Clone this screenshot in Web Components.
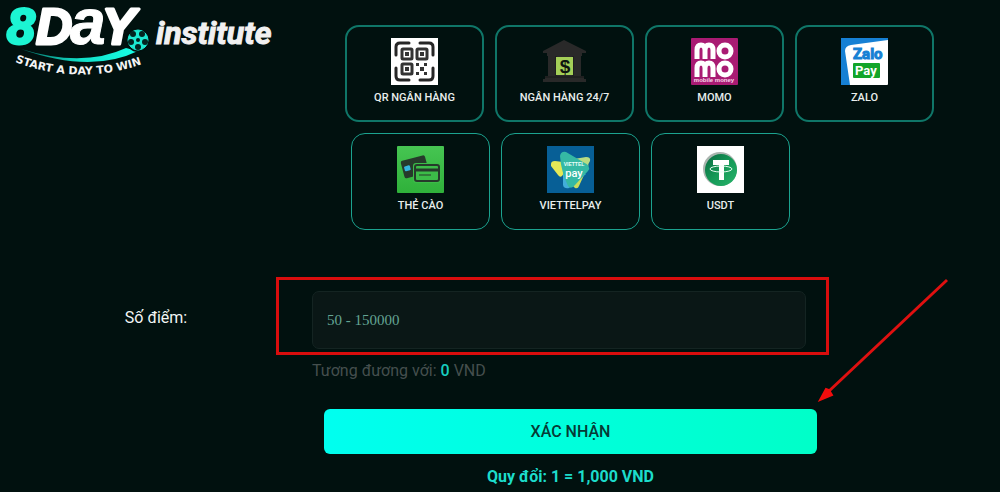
<!DOCTYPE html>
<html lang="vi">
<head>
<meta charset="utf-8">
<title>8DAY institute</title>
<style>
  body { margin: 0; background: #01110f; color: #fff; font-family: Roboto, "Liberation Sans", sans-serif; }
</style>
</head>
<body>
<deposit-page></deposit-page>

<script>
const define = (name, html, setup) => {
  const template = document.createElement("template");
  template.innerHTML = html;
  customElements.define(name, class extends HTMLElement {
    constructor() {
      super();
      this.attachShadow({ mode: "open" }).append(template.content.cloneNode(true));
    }
    connectedCallback() { if (setup) setup(this, this.shadowRoot); }
  });
};

define("brand-logo", `
<style>
  :host { display: block; }
  a { display: block; }
  svg { display: block; overflow: visible; }
</style>
<a href="#" aria-label="8DAY institute">
<svg width="280" height="84" viewBox="0 0 280 84">
  <defs>
    <linearGradient id="swoosh" x1="0" x2="1"><stop offset="0" stop-color="#046b62"/><stop offset=".5" stop-color="#12dfc8"/><stop offset="1" stop-color="#17ffe6"/></linearGradient>
    <path id="arc" d="M15 62 Q85 88 153 60"/>
  </defs>
  <g font-family="Liberation Sans, sans-serif" font-weight="700" font-style="italic" font-size="50" fill="#fff" stroke="#fff" stroke-width="3" stroke-linejoin="round">
    <text x="7" y="44" fill="#1cf5d3" stroke="#1cf5d3">8</text>
    <text x="36" y="44">D</text>
    <text x="70" y="44" font-size="64" stroke-width="1">a</text>
    <text x="102" y="44">Y</text>
  </g>
  <path d="M21 49 Q83 68 126 48 L138 51 Q91 74 21 49Z" fill="url(#swoosh)"/>
  <circle cx="138" cy="40" r="12" fill="#01110f"/>
  <circle cx="138" cy="40" r="10" fill="#1ce9d0" stroke="#1ce9d0" stroke-width="1"/>
  <g fill="#032520"><circle cx="133" cy="34" r="3"/><circle cx="142" cy="34" r="3"/><circle cx="145" cy="42" r="3"/><circle cx="138" cy="47" r="3"/><circle cx="131" cy="42" r="3"/><circle cx="138" cy="40" r="2"/></g>
  <text font-family="DejaVu Sans, sans-serif" font-weight="700" font-size="11" fill="#f4f4f4"><textPath href="#arc">START A DAY TO WIN</textPath></text>
  <text x="156" y="44" font-family="Liberation Sans Narrow, Roboto, sans-serif" font-weight="700" font-style="italic" font-size="32" fill="#f1f1f1" stroke="#f1f1f1">institute</text>
</svg>
</a>`);

const icons = {
  qr: `<rect width="47" height="47" fill="#fff"/>
    <g fill="none" stroke="#262626" stroke-width="3" stroke-linecap="round">
      <path d="M5 17V9q0-4 4-4h9M29 5h9q4 0 4 4v8M42 30v8q0 4-4 4h-9M18 42H9q-4 0-4-4v-8"/></g>
    <g fill="none" stroke="#333" stroke-width="3"><rect x="11" y="11" width="10" height="10" rx="1"/><rect x="26" y="11" width="10" height="10" rx="1"/><rect x="11" y="26" width="10" height="10" rx="1"/></g>
    <g fill="#333"><path d="M14 14h4v4h-4zM29 14h4v4h-4zM14 29h4v4h-4zM25 25h3v3h-3zM33 25h3v3h-3zM29 29h4v4h-4zM25 34h3v3h-3zM33 34h3v3h-3z"/></g>`,
  bank: `<g fill="#292929"><path d="M23 2L45 13v2H2v-2zM6 15h35v3H6zM7 18h8v20H7zM32 18h8v20h-8zM15 18h17v20H15zM4 38h39v3H4zM2 41h43v3H2z"/></g>
    <path d="M15 18v20M32 18v20M4 39h39" stroke="#171918"/>
    <rect x="15" y="19" width="17" height="18" fill="#a4cf58"/>
    <text x="24" y="35" text-anchor="middle" font-family="Liberation Sans, sans-serif" font-weight="700" font-size="19" fill="#101510">$</text>`,
  momo: `<rect width="47" height="47" rx="1" fill="#a91b73"/>
    <g fill="none" stroke="#fff" stroke-width="5">
      <path d="M6 21v-9q0-5 4-5t4 5v9M14 12q0-5 4-5t4 5v9M6 39v-9q0-5 4-5t4 5v9M14 30q0-5 4-5t4 5v9"/>
      <circle cx="34" cy="13" r="6"/><circle cx="34" cy="31" r="6"/></g>
    <text x="23" y="44" text-anchor="middle" font-family="Liberation Sans, sans-serif" font-weight="700" font-size="6" fill="#f7d7e9">mobile money</text>`,
  zalo: `<rect width="47" height="47" rx="1" fill="#fff"/><path d="M0 0h47v2L10 7Q4 8 4 13l5 34H0z" fill="#1680d4"/>
    <text x="12" y="21" font-family="Roboto, sans-serif" font-weight="700" font-size="15" fill="#1680d4" stroke="#1680d4">Zalo</text>
    <rect x="12" y="25" width="27" height="15" rx="1" fill="#12a529"/>
    <text x="14" y="37" font-family="Roboto, sans-serif" font-weight="700" font-size="13" fill="#fff">Pay</text>`,
  card: `<defs><linearGradient id="g" x2="0" y2="1"><stop stop-color="#46c552"/><stop offset="1" stop-color="#2fb13a"/></linearGradient></defs>
    <rect width="47" height="47" rx="1" fill="url(#g)"/>
    <g transform="rotate(-15 17 20)"><rect x="5" y="12" width="25" height="18" rx="2" fill="#263a2b"/><rect x="7" y="18" width="6" height="5" rx="1" fill="#35b5df"/></g>
    <rect x="16" y="17" width="28" height="20" rx="3" fill="#3cbc48"/>
    <rect x="18" y="19" width="24" height="16" rx="2" fill="#3cbc48" stroke="#263a2b" stroke-width="2"/>
    <path d="M18 24h24" stroke="#263a2b" stroke-width="3"/><path d="M22 29h12" stroke="#263a2b"/>`,
  viettel: `<rect width="47" height="47" fill="#075f96"/>
    <path d="M4 18q0-3 4-3l16 2-9 13q-2 2-4-1L4 20z" fill="#e4e957"/><path d="M27 13l12-2q5 0 4 4l-12 22z" fill="#b9dc83"/>
    <path d="M24 38l4 4q3 1 4-2l10-22z" fill="#cbdc5a"/><path d="M16 25v14q1 4 6 3l17-14z" fill="#42aeda"/>
    <path d="M13 10q1-5 6-4l17 10q9 4 5 9L28 39q-4 5-7 1Q14 25 13 10z" fill="#35b9a4"/>
    <text x="27" y="20" text-anchor="middle" font-family="Liberation Sans, sans-serif" font-weight="700" font-size="5" fill="#eafffb">VIETTEL</text>
    <text x="27" y="31" text-anchor="middle" font-family="Roboto, sans-serif" font-weight="500" font-size="11" fill="#fff">pay</text>`,
  usdt: `<defs><linearGradient id="g" x2="1" y2="1"><stop stop-color="#0b6b42"/><stop offset=".5" stop-color="#159957"/><stop offset="1" stop-color="#28b46b"/></linearGradient></defs>
    <rect width="47" height="47" fill="#fff"/><circle cx="23" cy="23" r="17" fill="#aab5af"/><circle cx="24" cy="24" r="16" fill="url(#g)"/>
    <path d="M16 14h16v5h-5v15h-5V19h-6z" fill="#fff"/><ellipse cx="24" cy="23" rx="11" ry="3" fill="none" stroke="#e8fff3" stroke-width="1"/>`
};

define("payment-option", `
<style>
  :host { display: block; flex: 0 0 139px; }
  button {
    box-sizing: border-box; width: 100%; height: 97px; padding: 0 0 3px; margin: 0;
    display: flex; flex-direction: column; align-items: center; justify-content: center; gap: 5px;
    border: var(--option-border, 1px solid #1ba38f); border-radius: 14px; background: transparent;
    color: #e8eeec; font: 500 11px/16px Roboto, sans-serif; cursor: pointer;
  }
  svg { display: block; flex: none; }
</style>
<button type="button"><svg width="47" height="47" viewBox="0 0 47 47" aria-hidden="true"></svg><span><slot></slot></span></button>`,
(host, root) => { root.querySelector("svg").innerHTML = icons[host.getAttribute("icon")]; });

define("payment-row", `
<style>
  :host { display: flex; gap: 11px; }
</style>
<slot></slot>`);

define("amount-field", `
<style>
  :host { display: grid; grid-template-columns: 312fr 494fr 194fr; }
  label { text-align: center; font-size: 16px; line-height: 54px; color: #f2f5f4; }
  .field { position: relative; }
  input {
    display: block; box-sizing: border-box; width: 100%; height: 58px; margin: 0; padding: 0 14px;
    border: 1px solid #142422; border-radius: 7px; background: #0a1716; outline: none;
    color: #6fb5a4; font: 15px "Liberation Serif", serif;
  }
  input::placeholder { color: #64a494; opacity: 1; }
  .mark { position: absolute; inset: -14px -23px -6px -36px; border: 3px solid #d90d0d; pointer-events: none; }
  .arrow { position: absolute; left: 100%; top: -14px; margin-left: 10px; pointer-events: none; }
  p { margin: 12px 0 0; font-size: 16px; line-height: 20px; color: #454f4e; }
  b { font-weight: 500; color: #17cfc0; }
</style>
<label for="amount">Số điểm:</label>
<div>
  <div class="field">
    <input id="amount" type="text" inputmode="numeric" placeholder="50 - 150000">
    <div class="mark"></div>
    <svg class="arrow" width="136" height="130" viewBox="0 0 136 130" aria-hidden="true">
      <path d="M131 3L12 115" stroke="#df1010" stroke-width="3"/><path d="M4 123l6-11 3 1 3 5z" fill="#f20d0d" stroke="#f20d0d" stroke-width="2"/>
    </svg>
  </div>
  <p>Tương đương với: <b>0</b> VND</p>
</div>`);

define("submit-area", `
<style>
  :host { display: grid; grid-template-columns: 324fr 493fr 183fr; }
  div { grid-column: 2; text-align: center; }
  button {
    display: block; width: 100%; height: 45px; padding: 0; margin: 0; border: 0; border-radius: 6px;
    background: linear-gradient(100deg, #00fff0, #00ffc8); color: #063a35;
    font: 500 16px/20px Roboto, sans-serif; cursor: pointer;
  }
  p { margin: 13px 0 0; font-size: 16px; line-height: 20px; font-weight: 700; color: #1cdccb; }
</style>
<div><button type="submit">XÁC NHẬN</button><p>Quy đổi: 1 = 1,000 VND</p></div>`);

define("deposit-page", `
<style>
  :host { display: block; padding-bottom: 4px; }
  header { display: grid; grid-template-columns: 345px 1fr; }
  .methods { display: grid; gap: 11px; padding-top: 25px; }
  .first { --option-border: 2px solid #0f7668; }
  .second { padding-left: 6px; }
  form { display: grid; gap: 28px; margin-top: 61px; }
</style>
<header>
  <brand-logo></brand-logo>
  <div class="methods">
    <payment-row class="first">
      <payment-option icon="qr">QR NGÂN HÀNG</payment-option>
      <payment-option icon="bank">NGÂN HÀNG 24/7</payment-option>
      <payment-option icon="momo">MOMO</payment-option>
      <payment-option icon="zalo">ZALO</payment-option>
    </payment-row>
    <payment-row class="second">
      <payment-option icon="card">THẺ CÀO</payment-option>
      <payment-option icon="viettel">VIETTELPAY</payment-option>
      <payment-option icon="usdt">USDT</payment-option>
    </payment-row>
  </div>
</header>
<form>
  <amount-field></amount-field>
  <submit-area></submit-area>
</form>`);
</script>
</body>
</html>
